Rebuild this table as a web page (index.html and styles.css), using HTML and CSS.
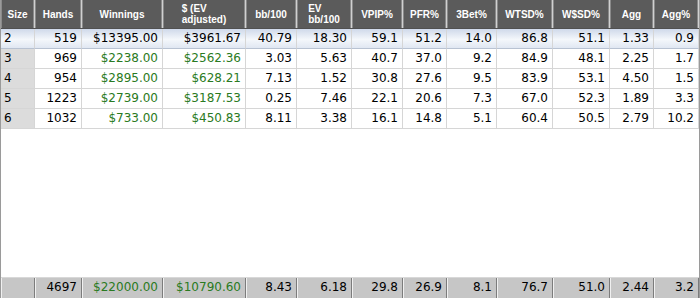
FILE: index.html
```html
<!DOCTYPE html>
<html>
<head>
<meta charset="utf-8">
<link rel="stylesheet" href="styles.css">
</head>
<body>
<div class="grid">
  <div class="row head">
    <div class="hc"><span>Size</span></div>
    <div class="hc"><span>Hands</span></div>
    <div class="hc"><span>Winnings</span></div>
    <div class="hc"><span>$ (EV<br>adjusted)</span></div>
    <div class="hc"><span>bb/100</span></div>
    <div class="hc"><span>EV<br>bb/100</span></div>
    <div class="hc"><span>VPIP%</span></div>
    <div class="hc"><span>PFR%</span></div>
    <div class="hc"><span>3Bet%</span></div>
    <div class="hc"><span>WTSD%</span></div>
    <div class="hc"><span>W$SD%</span></div>
    <div class="hc"><span>Agg</span></div>
    <div class="hc"><span>Agg%</span></div>
  </div>
  <div class="row data sel">
    <div class="c size">2</div><div class="c">519</div><div class="c">$13395.00</div><div class="c">$3961.67</div><div class="c">40.79</div><div class="c">18.30</div><div class="c">59.1</div><div class="c">51.2</div><div class="c">14.0</div><div class="c">86.8</div><div class="c">51.1</div><div class="c">1.33</div><div class="c">0.9</div>
  </div>
  <div class="row data">
    <div class="c size">3</div><div class="c">969</div><div class="c money">$2238.00</div><div class="c money">$2562.36</div><div class="c">3.03</div><div class="c">5.63</div><div class="c">40.7</div><div class="c">37.0</div><div class="c">9.2</div><div class="c">84.9</div><div class="c">48.1</div><div class="c">2.25</div><div class="c">1.7</div>
  </div>
  <div class="row data">
    <div class="c size">4</div><div class="c">954</div><div class="c money">$2895.00</div><div class="c money">$628.21</div><div class="c">7.13</div><div class="c">1.52</div><div class="c">30.8</div><div class="c">27.6</div><div class="c">9.5</div><div class="c">83.9</div><div class="c">53.1</div><div class="c">4.50</div><div class="c">1.5</div>
  </div>
  <div class="row data">
    <div class="c size">5</div><div class="c">1223</div><div class="c money">$2739.00</div><div class="c money">$3187.53</div><div class="c">0.25</div><div class="c">7.46</div><div class="c">22.1</div><div class="c">20.6</div><div class="c">7.3</div><div class="c">67.0</div><div class="c">52.3</div><div class="c">1.89</div><div class="c">3.3</div>
  </div>
  <div class="row data">
    <div class="c size">6</div><div class="c">1032</div><div class="c money">$733.00</div><div class="c money">$450.83</div><div class="c">8.11</div><div class="c">3.38</div><div class="c">16.1</div><div class="c">14.8</div><div class="c">5.1</div><div class="c">60.4</div><div class="c">50.5</div><div class="c">2.79</div><div class="c">10.2</div>
  </div>
  <div class="empty"></div>
  <div class="row foot">
    <div class="f"></div><div class="f">4697</div><div class="f money">$22000.00</div><div class="f money">$10790.60</div><div class="f">8.43</div><div class="f">6.18</div><div class="f">29.8</div><div class="f">26.9</div><div class="f">8.1</div><div class="f">76.7</div><div class="f">51.0</div><div class="f">2.44</div><div class="f">3.2</div>
  </div>
</div>
</body>
</html>
```

FILE: styles.css
```css
html, body {
  margin: 0;
  padding: 0;
  background: #ffffff;
}
.grid {
  width: 700px;
  height: 298px;
  display: flex;
  flex-direction: column;
  box-sizing: border-box;
  border-left: 1px solid #9a9a9a;
  border-right: 1px solid #9a9a9a;
  font-family: "DejaVu Sans", Verdana, sans-serif;
  font-size: 12px;
  color: #000;
  overflow: hidden;
}
.row {
  display: grid;
  grid-template-columns: 34px 47px 81px 83px 51px 55px 51px 44px 50px 56px 57px 44px 1fr;
}
.head {
  height: 29px;
  background: #d0d0d0;
  border-bottom: 1px solid #505050;
  box-sizing: border-box;
}
.hc {
  background: #5b5b5b;
  border-left: 1px solid #8a8a8a;
  border-right: 1px solid #8a8a8a;
  margin-right: 1px;
  display: flex;
  align-items: center;
  justify-content: center;
  color: #fff;
  font-family: "Liberation Sans", Arial, sans-serif;
  font-weight: bold;
  font-size: 10px;
  line-height: 11px;
}
.hc span {
  text-align: left;
}
.data {
  height: 20px;
}
.c {
  box-sizing: border-box;
  border-right: 1px solid #d6d6d6;
  border-bottom: 1px solid #d6d6d6;
  text-align: right;
  padding: 0 4px 0 2px;
  line-height: 19px;
  white-space: nowrap;
}
.c.size {
  background: #dcdcdc;
  text-align: left;
  padding-left: 3px;
}
.money {
  color: #2a7a22;
}
.sel .c {
  background: linear-gradient(#cfd9ea, #f4f7fb 55%, #e0e7f2);
  border-bottom-color: #b8c2d2;
  color: #000;
}
.empty {
  flex: 1;
}
.foot {
  height: 20px;
  background: #c6c6c6;
  border-top: 1px solid #d8d8d8;
}
.f {
  box-sizing: border-box;
  border-right: 1px solid #7c7c7c;
  border-left: 1px solid #f0f0f0;
  text-align: right;
  padding-right: 4px;
  line-height: 19px;
  white-space: nowrap;
}
.f.money {
  color: #2a7a22;
}
```
